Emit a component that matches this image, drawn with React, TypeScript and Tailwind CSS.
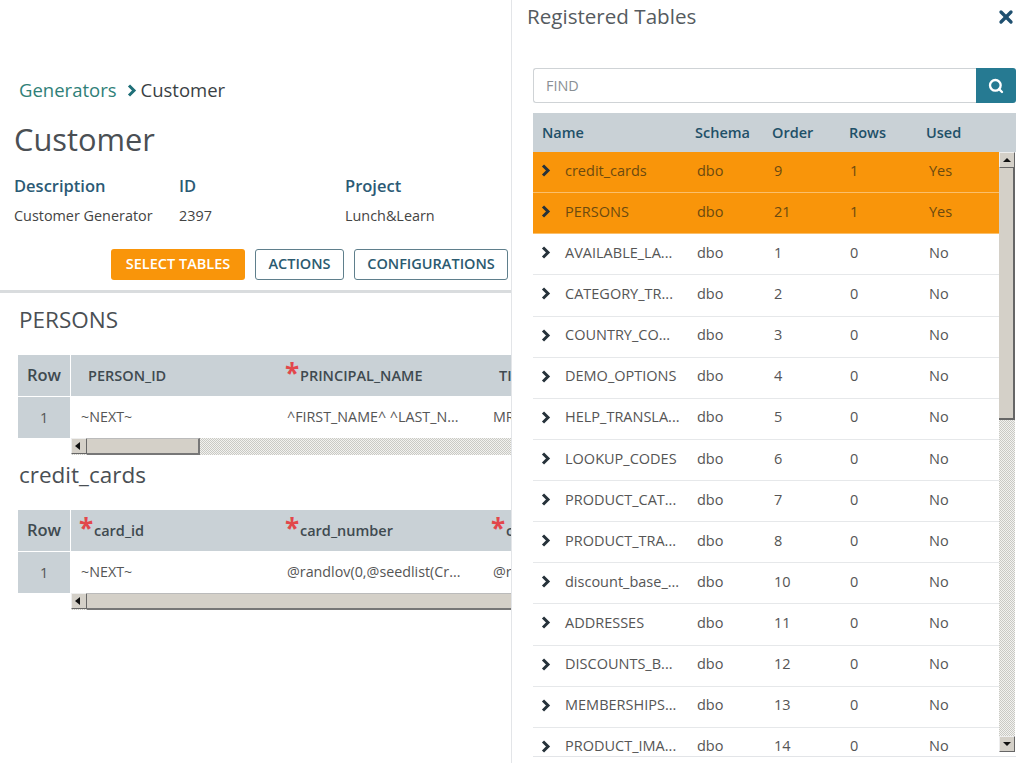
import { Search, X } from "lucide-react"

const tables = [
  { name: "credit_cards", order: 9, rows: 1, used: "Yes" },
  { name: "PERSONS", order: 21, rows: 1, used: "Yes" },
  { name: "AVAILABLE_LA...", order: 1, rows: 0, used: "No" },
  { name: "CATEGORY_TR...", order: 2, rows: 0, used: "No" },
  { name: "COUNTRY_CO...", order: 3, rows: 0, used: "No" },
  { name: "DEMO_OPTIONS", order: 4, rows: 0, used: "No" },
  { name: "HELP_TRANSLA...", order: 5, rows: 0, used: "No" },
  { name: "LOOKUP_CODES", order: 6, rows: 0, used: "No" },
  { name: "PRODUCT_CAT...", order: 7, rows: 0, used: "No" },
  { name: "PRODUCT_TRA...", order: 8, rows: 0, used: "No" },
  { name: "discount_base_...", order: 10, rows: 0, used: "No" },
  { name: "ADDRESSES", order: 11, rows: 0, used: "No" },
  { name: "DISCOUNTS_B...", order: 12, rows: 0, used: "No" },
  { name: "MEMBERSHIPS...", order: 13, rows: 0, used: "No" },
  { name: "PRODUCT_IMA...", order: 14, rows: 0, used: "No" },
]

function Chevron({ className }: { className: string }) {
  return (
    <svg width="10" height="13" viewBox="0 0 10 13" className={className}>
      <polyline points="2,1.5 7,6.5 2,11.5" fill="none" stroke="currentColor" strokeWidth="3" />
    </svg>
  )
}

function Star() {
  return <span className="w-[15px] h-[16px] shrink-0 text-[26px] leading-[26px] text-[#e2474b] font-bold -translate-y-[8px]">*</span>
}

function ArrowBtn({ dir }: { dir: "left" | "up" | "down" }) {
  const pts = dir === "left" ? "6,1 6,9 1,5" : dir === "up" ? "1,7 9,7 5,3" : "1,3 9,3 5,7"
  return (
    <div className="w-[16px] h-[16px] shrink-0 bg-[#d4d0c8] border-r border-b border-r-[#666] border-b-[#666] border-t border-l border-t-[#eee] border-l-[#eee] flex items-center justify-center">
      <svg width="10" height="10" viewBox="0 0 10 10">
        <polygon points={pts} fill="#111" />
      </svg>
    </div>
  )
}

function HScroll({ thumb }: { thumb: boolean }) {
  return (
    <div className="ml-[71px] h-[17px] flex bg-[repeating-conic-gradient(#c9c9c4_0_25%,#f2f2ef_0_50%)] bg-[length:2px_2px]">
      <ArrowBtn dir="left" />
      <div className={`bg-[#d4d0c8] border-t border-t-[#bbb] border-b-2 border-b-[#777] ${thumb ? "w-[113px] border-r-2 border-r-[#777]" : "flex-1"}`} />
    </div>
  )
}

function GenTable({ head, cells }: { head: { label: string; star?: boolean; left: string }[]; cells: { text: string; left: string }[] }) {
  return (
    <div className="ml-[18px] text-[#444]">
      <div className="flex h-[42px] border-b border-white">
        <div className="w-[52px] shrink-0 mr-[1px] bg-[#c9d1d6] flex items-center justify-center text-[16.5px] font-semibold text-[#3f4a50]">Row</div>
        <div className="flex-1 bg-[#c9d1d6] flex items-center overflow-hidden">
          {head.map((h) => (
            <div key={h.label} className={`shrink-0 flex items-center text-[14.5px] font-semibold text-[#3f4a50] whitespace-nowrap ${h.left}`}>
              {h.star && <Star />}
              <span>{h.label}</span>
            </div>
          ))}
        </div>
      </div>
      <div className="flex h-[41px]">
        <div className="w-[52px] shrink-0 bg-[#c9d1d6] flex items-center justify-center text-[14.4px] text-[#555]">1</div>
        <div className="flex-1 flex items-center overflow-hidden text-[14.3px] text-[#555] ml-[1px] pb-[2px]">
          {cells.map((c) => (
            <div key={c.text} className={`shrink-0 whitespace-nowrap ${c.left}`}>{c.text}</div>
          ))}
        </div>
      </div>
    </div>
  )
}

export default function App() {
  return (
    <div className="h-[763px] w-[1024px] overflow-hidden flex bg-white font-['Open_Sans',sans-serif]">
      {/* Generator detail */}
      <div className="w-[511px] shrink-0 overflow-hidden">
        <div className="pt-[78px] pl-[19px] flex items-center h-[102px] text-[18.5px] leading-[24px]">
          <span className="text-[#2f7f78]">Generators</span>
          <Chevron className="ml-[10px] mr-[4px] text-[#1f6f78]" />
          <span className="text-[#3a3f44]">Customer</span>
        </div>
        <h1 className="pl-[14px] mt-[16px] text-[30.8px] leading-[42px] text-[#4a4f54]">Customer</h1>
        <div className="flex pl-[14px] mt-[15px]">
          <div className="w-[165px]">
            <div className="text-[16.5px] leading-[22px] font-semibold text-[#2b5a75]">Description</div>
            <div className="mt-[9px] text-[14.4px] leading-[20px] text-[#444]">Customer Generator</div>
          </div>
          <div className="w-[166px]">
            <div className="text-[16.5px] leading-[22px] font-semibold text-[#2b5a75]">ID</div>
            <div className="mt-[9px] text-[14.4px] leading-[20px] text-[#444]">2397</div>
          </div>
          <div>
            <div className="text-[16.5px] leading-[22px] font-semibold text-[#2b5a75]">Project</div>
            <div className="mt-[9px] text-[14.4px] leading-[20px] text-[#444]">Lunch&amp;Learn</div>
          </div>
        </div>
        <div className="flex justify-end gap-[10px] pr-[3px] mt-[23px]">
          <button className="h-[31px] w-[134px] pb-[1px] rounded-[3px] bg-[#f9950a] text-white text-[14.5px] font-semibold">SELECT TABLES</button>
          <button className="h-[31px] w-[89px] pb-[1px] rounded-[3px] border border-[#5f7f8c] text-[#2b5a70] text-[14.5px] font-semibold">ACTIONS</button>
          <button className="h-[31px] w-[154px] pb-[1px] rounded-[3px] border border-[#5f7f8c] text-[#2b5a70] text-[14.5px] font-semibold">CONFIGURATIONS</button>
        </div>
        <div className="h-[3px] bg-[#d9dcde] mt-[10px]" />

        <h2 className="pl-[19px] mt-[12px] text-[22.5px] leading-[30px] text-[#4a4f54]">PERSONS</h2>
        <div className="mt-[20px]">
          <GenTable
            head={[
              { label: "PERSON_ID", left: "w-[214px] pl-[17px]" },
              { label: "PRINCIPAL_NAME", star: true, left: "w-[214px]" },
              { label: "TITLE", left: "w-[60px]" },
            ]}
            cells={[
              { text: "~NEXT~", left: "w-[216px] pl-[10px]" },
              { text: "^FIRST_NAME^ ^LAST_N...", left: "w-[206px]" },
              { text: "MR", left: "w-[40px]" },
            ]}
          />
          <HScroll thumb />
        </div>

        <h2 className="pl-[19px] mt-[5px] text-[22.5px] leading-[30px] text-[#4a4f54]">credit_cards</h2>
        <div className="mt-[20px]">
          <GenTable
            head={[
              { label: "card_id", star: true, left: "w-[214px] pl-[8px]" },
              { label: "card_number", star: true, left: "w-[206px]" },
              { label: "c", star: true, left: "w-[40px]" },
            ]}
            cells={[
              { text: "~NEXT~", left: "w-[216px] pl-[10px]" },
              { text: "@randlov(0,@seedlist(Cr...", left: "w-[206px]" },
              { text: "@r", left: "w-[40px]" },
            ]}
          />
          <HScroll thumb={false} />
        </div>
      </div>

      {/* Registered tables panel */}
      <div className="w-[513px] shrink-0 border-l border-[#e3e5e8] pl-[21px] pr-[8px] flex flex-col">
        <div className="h-[34px] flex items-center justify-between">
          <span className="-ml-[6px] pb-[1px] text-[20.6px] text-[#555b60]">Registered Tables</span>
          <X className="w-[20px] h-[20px] text-[#1f5070]" strokeWidth={4} />
        </div>
        <div className="mt-[34px] h-[35px] flex">
          <div className="flex-1 border border-r-0 border-[#cfd3d6] rounded-l-[3px] pl-[12px] flex items-center text-[14.4px] text-[#8a8f94]">FIND</div>
          <div className="w-[40px] rounded-r-[3px] bg-[#267a92] flex items-center justify-center">
            <Search className="w-[16px] h-[16px] text-white" strokeWidth={3.5} />
          </div>
        </div>
        <div className="mt-[10px] h-[39px] bg-[#c9d1d6] flex items-center text-[14.5px] font-semibold text-[#1f5068]">
          <div className="w-[162px] pl-[9px]">Name</div>
          <div className="w-[77px]">Schema</div>
          <div className="w-[77px]">Order</div>
          <div className="w-[77px]">Rows</div>
          <div>Used</div>
        </div>
        <div className="h-[605px] flex overflow-hidden border-b border-[#e3e5e8]">
          <div className="w-[466px] shrink-0">
            {tables.map((t, i) => (
              <div
                key={t.name}
                className={`h-[41.14px] shrink-0 flex items-center text-[14.5px] border-b pb-[3px] ${
                  i < 2 ? "bg-[#f9950a] text-[#6b4a10] border-[#fbbf6a]" : "bg-white text-[#555] border-[#e6e8ea]"
                }`}
              >
                <div className="w-[32px] pl-[8px] shrink-0">
                  <Chevron className="text-[#26323a]" />
                </div>
                <div className="w-[132px] shrink-0 whitespace-nowrap">{t.name}</div>
                <div className="w-[76px] shrink-0">dbo</div>
                <div className="w-[76px] shrink-0 pl-[1px]">{t.order}</div>
                <div className="w-[76px] shrink-0 pl-[1px]">{t.rows}</div>
                <div className="pl-[4px]">{t.used}</div>
              </div>
            ))}
          </div>
          <div className="w-[16px] h-[600px] shrink-0 flex flex-col bg-[repeating-conic-gradient(#c9c9c4_0_25%,#f2f2ef_0_50%)] bg-[length:2px_2px]">
            <ArrowBtn dir="up" />
            <div className="h-[252px] bg-[#d4d0c8] border-b-2 border-b-[#666] border-r-2 border-r-[#666]" />
            <div className="flex-1" />
            <ArrowBtn dir="down" />
          </div>
        </div>
      </div>
    </div>
  )
}
